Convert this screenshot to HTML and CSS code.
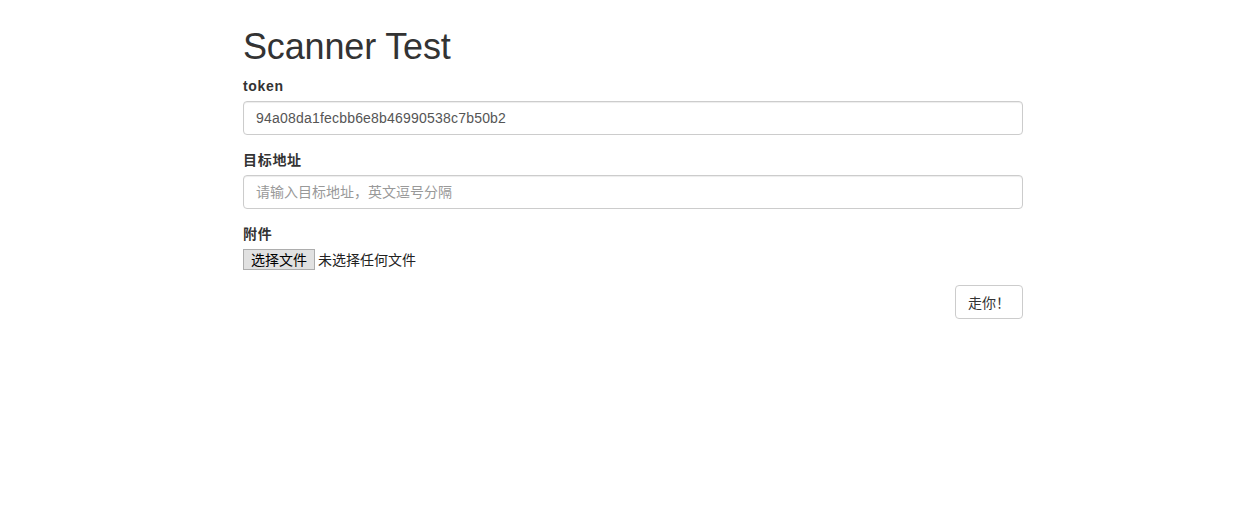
FILE: index.html
```html
<!DOCTYPE html>
<html lang="zh-CN">
<head>
<meta charset="utf-8">
<title>Scanner Test</title>
<link rel="stylesheet" href="styles.css">
</head>
<body>
<div class="container">
  <h1 class="title">Scanner Test</h1>
  <form class="form">
    <div class="form-group">
      <label class="label">token</label>
      <input class="form-control value-input" type="text" value="94a08da1fecbb6e8b46990538c7b50b2">
    </div>
    <div class="form-group">
      <label class="label">目标地址</label>
      <input class="form-control" type="text" placeholder="请输入目标地址，英文逗号分隔">
    </div>
    <div class="form-group">
      <label class="label">附件</label>
      <div class="file-input">
        <button type="button" class="file-btn">选择文件</button>
        <span class="file-text">未选择任何文件</span>
      </div>
    </div>
    <div class="actions">
      <button type="button" class="btn">走你！</button>
    </div>
  </form>
</div>
</body>
</html>
```
FILE: styles.css
```css
* { box-sizing: border-box; }
html, body { margin: 0; padding: 0; background: #fff; }
body {
  font-family: "Liberation Sans", Arial, "Noto Sans CJK SC", sans-serif;
  font-size: 14px;
  line-height: 1.42857;
  color: #333;
}
.container {
  width: 780px;
  margin-left: 243px;
}
.title {
  font-family: "Liberation Sans", Arial, sans-serif;
  font-weight: 500;
  font-size: 36px;
  line-height: 1.1;
  margin: 27px 0 9px;
  color: #333;
  letter-spacing: -0.15px;
}
.form-group { margin-bottom: 15px; }
.label {
  display: block;
  font-weight: 700;
  padding-top: 1px;
  margin-bottom: 4px;
  max-width: 100%;
  letter-spacing: 0.7px;
}
.form-control {
  display: block;
  width: 100%;
  height: 34px;
  padding: 6px 12px;
  font-family: "Liberation Sans", Arial, "Noto Sans CJK SC", sans-serif;
  font-size: 14px;
  line-height: 1.42857;
  color: #555;
  background: #fff;
  border: 1px solid #ccc;
  border-radius: 4px;
  box-shadow: inset 0 1px 1px rgba(0,0,0,.075);
  outline: none;
}
.value-input { letter-spacing: 0.2px; }
.form-control::placeholder { color: #999; letter-spacing: 0; }
.file-input {
  display: flex;
  align-items: center;
  height: 21px;
  margin-top: 1px;
}
.file-btn {
  width: 72px;
  height: 21px;
  padding: 0;
  margin: 0 3px 0 0;
  font-family: "Noto Sans CJK SC", sans-serif;
  font-size: 14px;
  line-height: 19px;
  color: #000;
  background: #e1e1e1;
  border: 1px solid #adadad;
  border-radius: 0;
}
.file-text {
  font-family: "Noto Sans CJK SC", sans-serif;
  font-size: 14px;
  color: #222;
}
.actions {
  display: flex;
  justify-content: flex-end;
  margin-top: 1px;
}
.btn {
  height: 34px;
  padding: 6px 12px;
  font-family: "Noto Sans CJK SC", sans-serif;
  font-size: 14px;
  line-height: 20px;
  color: #333;
  background: #fff;
  border: 1px solid #ccc;
  border-radius: 4px;
}
```
